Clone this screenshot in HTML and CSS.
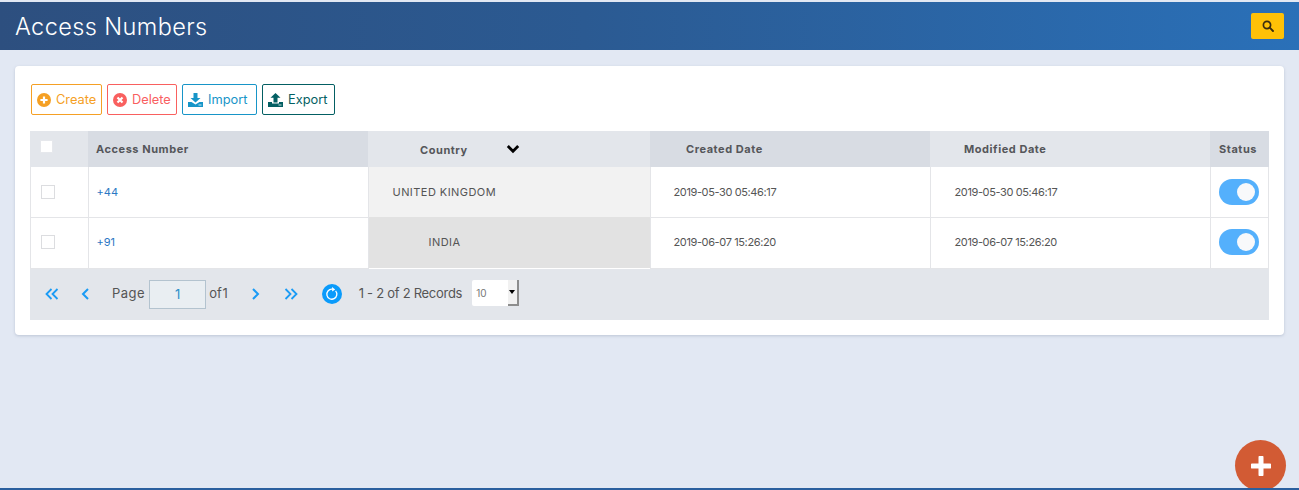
FILE: index.html
```html
<!DOCTYPE html>
<html lang="en">
<head>
<meta charset="utf-8">
<title>Access Numbers</title>
<link rel="stylesheet" href="styles.css">
</head>
<body>
<header class="topbar">
  <h1 class="title">Access Numbers</h1>
  <button class="search-btn" aria-label="Search">
    <svg width="12" height="12" viewBox="0 0 12 12"><circle cx="5" cy="5" r="3.6" fill="none" stroke="#3a2c10" stroke-width="1.7"/><path d="M7.7 7.7 11 11" stroke="#3a2c10" stroke-width="1.9" stroke-linecap="round"/></svg>
  </button>
</header>
<main class="card">
  <div class="toolbar">
    <button class="btn btn-create">
      <svg class="ico" width="14" height="14" viewBox="0 0 14 14"><circle cx="7" cy="7" r="7" fill="currentColor"/><path d="M7 3.4v7.2M3.4 7h7.2" stroke="#fff" stroke-width="2.2"/></svg>Create</button>
    <button class="btn btn-delete">
      <svg class="ico" width="14" height="14" viewBox="0 0 14 14"><circle cx="7" cy="7" r="7" fill="currentColor"/><path d="M4.500 4.500l5 5M9.500 4.500l-5 5" stroke="#fff" stroke-width="2.2"/></svg>Delete</button>
    <button class="btn btn-import">
      <svg class="ico" width="15" height="14" viewBox="0 0 15 14"><path d="M5.500 0h4v5h3L7.500 9.500 2.500 5h3z" fill="currentColor"/><path d="M0 9h3.500l4 2.500 4-2.500H15v5H0z" fill="currentColor"/><path d="M10.500 12h3" stroke="#fff" stroke-width=".8"/></svg>Import</button>
    <button class="btn btn-export">
      <svg class="ico" width="15" height="14" viewBox="0 0 15 14"><path d="M7.500 0l5 4.800h-3v4.700h-4V4.800h-3z" fill="currentColor"/><path d="M0 9h4v1.500h7V9h4v5H0z" fill="currentColor"/><path d="M10.500 12h3" stroke="#fff" stroke-width=".8"/></svg>Export</button>
  </div>
  <table class="grid">
    <colgroup>
      <col class="c-check"><col class="c-wide"><col class="c-country"><col class="c-wide"><col class="c-wide"><col class="c-status">
    </colgroup>
    <thead>
      <tr>
        <th class="th-light th-check"><span class="box box-head"></span></th>
        <th class="th-dark">Access Number</th>
        <th class="th-light th-country"><span class="country-label">Country</span><svg class="chev" width="14" height="10" viewBox="0 0 14 10"><path d="M1.800 2l5.200 5.200L12.200 2" fill="none" stroke="#000" stroke-width="2.800"/></svg></th>
        <th class="th-dark th-created">Created Date</th>
        <th class="th-light th-modified">Modified Date</th>
        <th class="th-dark th-status">Status</th>
      </tr>
    </thead>
    <tbody>
      <tr>
        <td class="td-check"><span class="box"></span></td>
        <td class="num">+44</td>
        <td class="country country-a"><span class="uk">UNITED KINGDOM</span></td>
        <td class="date date-new">2019-05-30 05:46:17</td>
        <td class="date date-mod">2019-05-30 05:46:17</td>
        <td class="td-status"><span class="toggle"></span></td>
      </tr>
      <tr class="row-two">
        <td class="td-check"><span class="box"></span></td>
        <td class="num">+91</td>
        <td class="country country-b"><span class="in">INDIA</span></td>
        <td class="date date-new">2019-06-07 15:26:20</td>
        <td class="date date-mod">2019-06-07 15:26:20</td>
        <td class="td-status"><span class="toggle"></span></td>
      </tr>
    </tbody>
  </table>
  <nav class="pager">
    <svg class="pg pg-first" width="14" height="12" viewBox="0 0 14 12"><path d="M6.500 1 1.500 6l5 5M12.500 1l-5 5 5 5" fill="none" stroke="#1a9bf5" stroke-width="1.800"/></svg>
    <svg class="pg pg-prev" width="9" height="12" viewBox="0 0 9 12"><path d="M7 1 2 6l5 5" fill="none" stroke="#1a9bf5" stroke-width="2"/></svg>
    <span class="pg-page">Page</span>
    <span class="pg-input">1</span>
    <span class="pg-of">of 1</span>
    <svg class="pg pg-next" width="9" height="12" viewBox="0 0 9 12"><path d="M2 1l5 5-5 5" fill="none" stroke="#1a9bf5" stroke-width="2"/></svg>
    <svg class="pg pg-last" width="14" height="12" viewBox="0 0 14 12"><path d="M1.500 1l5 5-5 5M7.500 1l5 5-5 5" fill="none" stroke="#1a9bf5" stroke-width="1.800"/></svg>
    <svg class="pg-refresh" width="20" height="20" viewBox="0 0 20 20"><circle cx="10" cy="10" r="10" fill="#0a9bfb"/><path d="M13.600 6.900A5 5 0 1 1 10 5.200" fill="none" stroke="#fff" stroke-width="1.300"/><path d="M10 3l3.200 2.400L10.200 7.600z" fill="#fff"/></svg>
    <span class="pg-records">1 - 2 of 2 Records</span>
    <span class="pg-size"><span class="pg-size-val">10</span><span class="pg-arrow"></span></span>
  </nav>
</main>
<button class="fab" aria-label="Add">
  <svg width="20" height="20" viewBox="0 0 20 20"><path d="M10 1.500v17M1.500 10h17" stroke="#fff" stroke-width="5" stroke-linecap="round"/></svg>
</button>
</body>
</html>
```
FILE: styles.css
```css
* { box-sizing: border-box; }
html, body { height: 100%; }
body {
  margin: 0;
  height: 490px;
  overflow: hidden;
  background: #e2e8f3;
  border-bottom: 2px solid #2a5f9e;
  font-family: Inter, "Open Sans", "Liberation Sans", sans-serif;
  color: #555;
  position: relative;
}
.topbar {
  margin-top: 2px;
  height: 48px;
  background: linear-gradient(90deg, #2d4f7f 0%, #2b5a92 45%, #2a70b8 100%);
  display: flex;
  align-items: center;
  justify-content: space-between;
  padding: 0 15px 0 15px;
}
.title {
  margin: 0;
  font-size: 23.500px;
  font-weight: 300;
  color: #fff;
  letter-spacing: .4px;
}
.search-btn {
  width: 33px;
  height: 26px;
  border: 0;
  border-radius: 2px;
  background: #ffc107;
  display: flex;
  align-items: center;
  justify-content: center;
  padding: 0;
}
.card {
  margin: 16px 15px 0;
  height: 269px;
  background: #fff;
  border-radius: 4px;
  box-shadow: 0 1px 3px rgba(120, 135, 160, .35);
  padding: 18px 15px 0;
}
.toolbar {
  display: flex;
  gap: 5px;
  height: 31px;
  margin-left: 1px;
  margin-bottom: 16px;
}
.btn {
  height: 31px;
  display: flex;
  align-items: center;
  background: #fff;
  border: 1px solid currentColor;
  border-radius: 2px;
  padding: 0 5px;
  font: 400 12.800px Inter, "Open Sans", sans-serif;
  white-space: nowrap;
}
.ico { margin-right: 5px; flex: none; }
.btn-create { color: #f5a024; width: 71px; }
.btn-delete { color: #f9605f; width: 70px; }
.btn-import { color: #1795c8; width: 75px; }
.btn-export { color: #035f63; width: 73px; }
.grid {
  width: 1239px;
  table-layout: fixed;
  border-collapse: collapse;
}
.c-check { width: 58px; }
.c-wide { width: 280px; }
.c-country { width: 282px; }
.c-status { width: 59px; }
.grid th {
  height: 36px;
  padding: 0 8px;
  text-align: left;
  font-size: 11px;
  font-weight: 700;
  color: #55565a;
  letter-spacing: .55px;
}
.th-light { background: #e3e6eb; }
.th-dark { background: #d8dce3; }
.grid .th-country { padding-left: 52px; }
.country-label { display: inline-block; width: 86px; padding-top: 2px; }
.grid .th-created { padding-left: 36px; }
.grid .th-modified { padding-left: 34px; }
.grid .th-status { padding-left: 9px; padding-right: 0; }
.grid td {
  height: 51px;
  padding: 0;
  font-size: 11px;
  border-top: 1px solid #e4e5e8;
  border-bottom: 1px solid #e4e5e8;
  border-left: 1px solid #e4e5e8;
  color: #555;
}
.grid tbody tr:first-child td { border-top: 0; height: 50px; }
.grid .row-two td { padding-bottom: 2px; }
.grid td:first-child { border-left: 0; box-shadow: inset 1px 0 #e4e5e8; }
.grid td:last-child { box-shadow: inset -1px 0 #e4e5e8; }
.box {
  display: block;
  width: 14px;
  height: 14px;
  border: 1px solid #dcdde0;
  background: #fff;
}
.box-head { width: 13px; height: 13px; margin: -5px 0 0 2px; border-color: #e6e8ec; }
.td-check .box { margin-left: 11px; }
.grid .num { padding-left: 8px; color: #2b78c4; }
.grid .country { border-top: 0; border-bottom: 0; letter-spacing: .45px; }
.country-a { background: #f2f2f2; }
.country-b { background: #e2e2e2; }
.uk { margin-left: 24px; }
.in { margin-left: 60px; }
.grid .date { letter-spacing: -.38px; }
.grid .date-new { padding-left: 23px; }
.grid .date-mod { padding-left: 24px; }
.grid .td-status { padding-left: 8px; }
.toggle {
  display: block;
  width: 40px;
  height: 26px;
  border-radius: 13px;
  background: #54b0fc;
  position: relative;
}
.toggle::after {
  content: "";
  position: absolute;
  right: 4px;
  top: 4px;
  width: 18px;
  height: 18px;
  border-radius: 50%;
  background: #f8f9fb;
}
.pager {
  width: 1239px;
  height: 51px;
  background: #e3e6eb;
  display: flex;
  align-items: center;
  font-size: 13px;
  color: #555;
}
.pg { flex: none; }
.pg-first { margin-left: 15px; }
.pg-prev { margin-left: 22px; }
.pg-page { margin-left: 22px; margin-bottom: 2px; letter-spacing: .5px; }
.pg-input {
  margin-left: 4px;
  width: 57px;
  height: 29px;
  background: #e9eef2;
  border: 1px solid #b3c3cf;
  color: #2d8fc9;
  display: flex;
  align-items: center;
  justify-content: center;
}
.pg-of { margin-left: 3px; margin-bottom: 2px; word-spacing: -3px; }
.pg-next { margin-left: 23px; }
.pg-last { margin-left: 24px; }
.pg-refresh { margin-left: 24px; margin-bottom: 1px; flex: none; }
.pg-records { margin-left: 17px; margin-bottom: 2px; letter-spacing: -.28px; }
.pg-size {
  margin-left: 10px;
  margin-bottom: 2px;
  width: 47px;
  height: 26px;
  background: #fff;
  border-radius: 2px;
  font-size: 10px;
  color: #777;
  display: flex;
  align-items: center;
  justify-content: space-between;
  padding-left: 4px;
}
.pg-arrow {
  width: 11px;
  height: 26px;
  background: #f1f1f1;
  border-right: 2px solid #8d8d8d;
  border-bottom: 2px solid #8d8d8d;
  position: relative;
}
.pg-arrow::after {
  content: "";
  position: absolute;
  left: 1px;
  top: 10px;
  border: 3.500px solid transparent;
  border-top: 4px solid #000;
  border-bottom: 0;
}
.fab {
  position: absolute;
  left: 1235px;
  top: 440px;
  width: 51px;
  height: 51px;
  border: 0;
  border-radius: 50%;
  background: #d25b34;
  display: flex;
  align-items: center;
  justify-content: center;
  padding: 0;
}
```
